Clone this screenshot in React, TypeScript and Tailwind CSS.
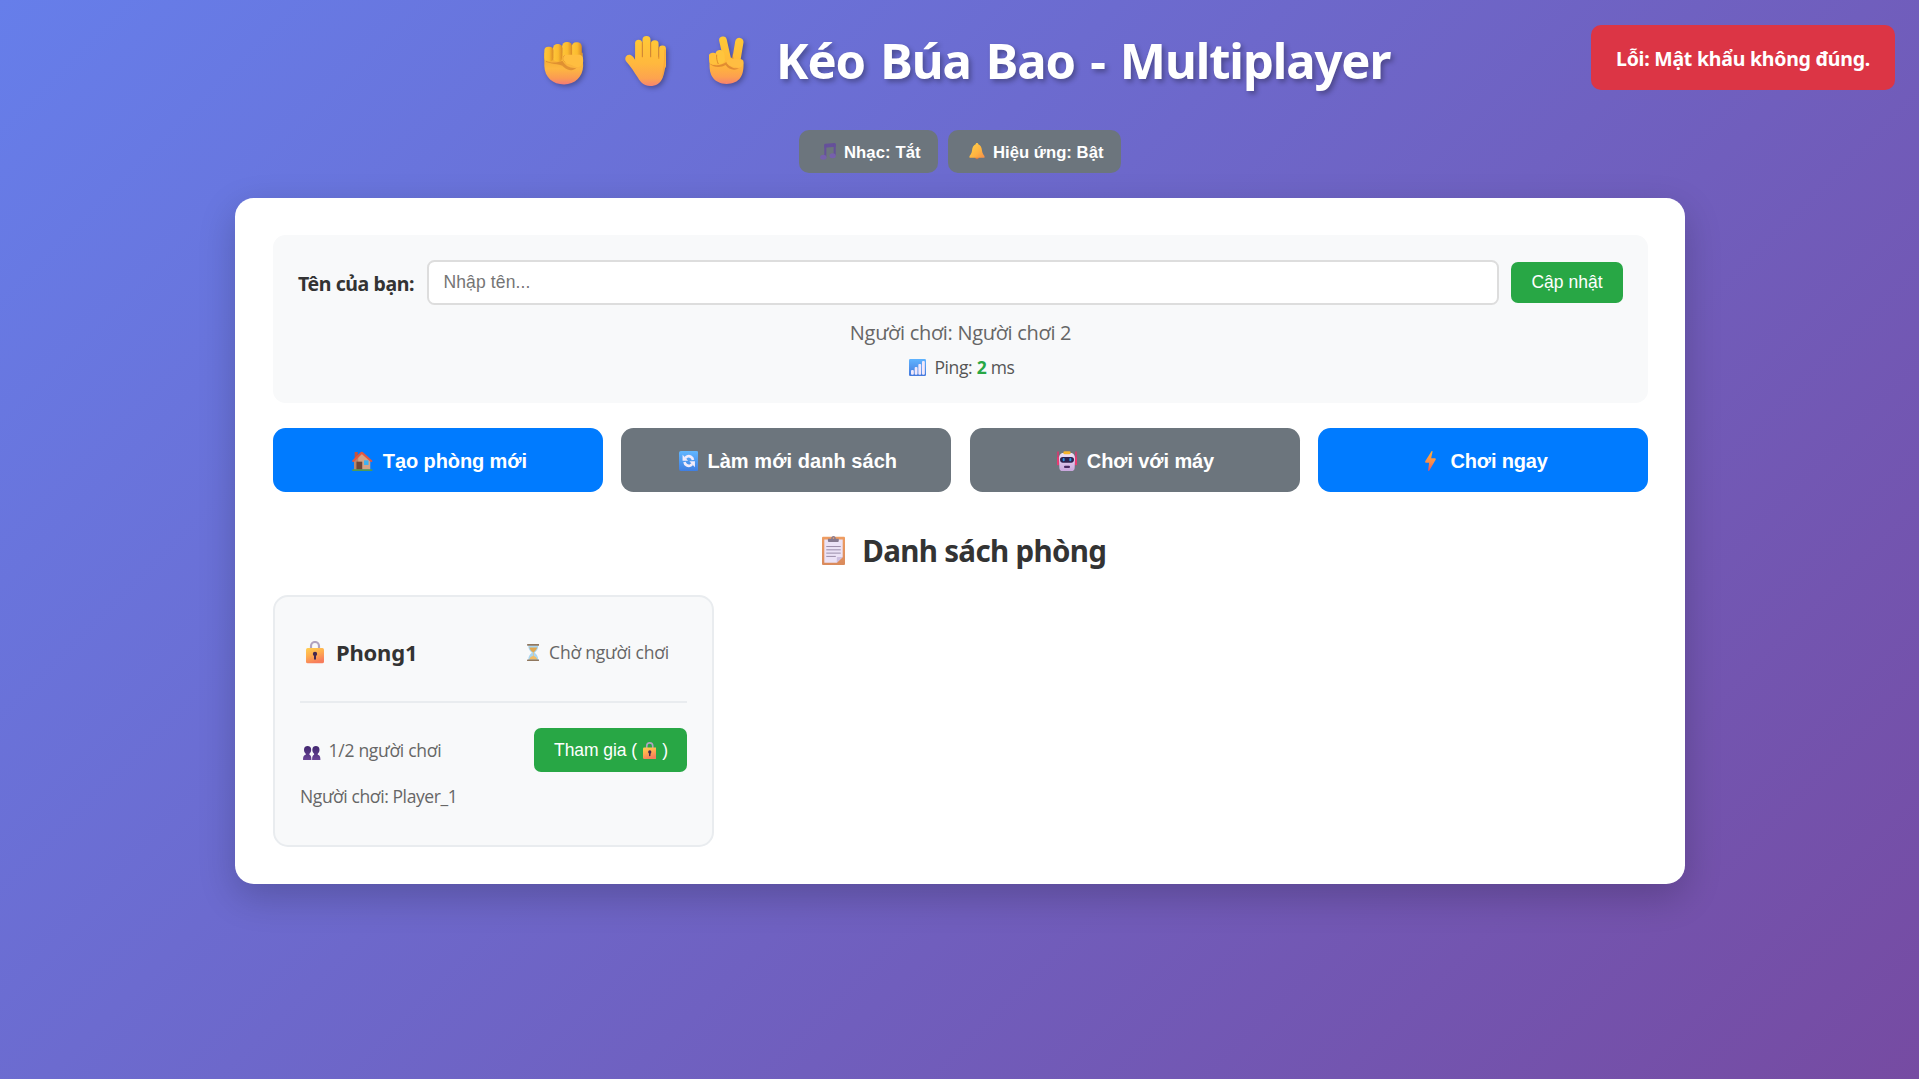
import type { ReactNode } from 'react';

function FistIcon() {
  return (
    <svg viewBox="0 0 118 127" className="ml-4 mt-[17px] h-[42.5px] w-[39.5px] shrink-0 drop-shadow-[2.5px_2.5px_2.5px_rgba(0,0,0,0.3)]">
      <defs>
        <linearGradient id="fistPalm" x1="0" y1="0" x2="0" y2="1">
          <stop offset="0" stopColor="#f0a92c" />
          <stop offset="0.5" stopColor="#fdb741" />
          <stop offset="0.8" stopColor="#fb9b52" />
          <stop offset="1" stopColor="#f47a78" />
        </linearGradient>
        <linearGradient id="fistFinger" x1="0" y1="0" x2="1" y2="0">
          <stop offset="0" stopColor="#ffc63a" />
          <stop offset="0.55" stopColor="#fbbb2e" />
          <stop offset="1" stopColor="#d98a27" />
        </linearGradient>
      </defs>
      <path d="M1 32H115L117 72C116 104 92 127 60 127C26 127 2 106 1 72Z" fill="url(#fistPalm)" />
      <rect x="83" y="1" width="30" height="56" rx="13" fill="url(#fistFinger)" />
      <rect x="54" y="0" width="30" height="56" rx="14" fill="url(#fistFinger)" />
      <rect x="27" y="6" width="28" height="52" rx="13" fill="url(#fistFinger)" />
      <rect x="1" y="14" width="27" height="44" rx="12" fill="url(#fistFinger)" />
      <path d="M6 56C20 64 40 62 56 56C60 70 80 80 97 77C88 88 70 86 58 74C52 66 30 68 6 60Z" fill="#cf7a2c" opacity="0.6" />
      <path d="M66 38H104C114 38 118 46 117 58C116 72 104 78 92 73C82 68 72 66 62 62C48 56 52 38 66 38Z" fill="#ffbe40" />
      <path d="M62 40C54 44 54 56 64 61" stroke="#d98a2a" strokeWidth="2.500" fill="none" opacity="0.7" />
    </svg>
  );
}

function HandIcon() {
  return (
    <svg viewBox="0 0 122 149" className="ml-[41.5px] mt-[11px] h-[50px] w-[41px] shrink-0 drop-shadow-[2.5px_2.5px_2.5px_rgba(0,0,0,0.3)]">
      <defs>
        <linearGradient id="handSkin" gradientUnits="userSpaceOnUse" x1="0" y1="0" x2="0" y2="149">
          <stop offset="0" stopColor="#ffca36" />
          <stop offset="0.55" stopColor="#ffb83e" />
          <stop offset="0.85" stopColor="#fda34f" />
          <stop offset="1" stopColor="#f68470" />
        </linearGradient>
      </defs>
      <g fill="url(#handSkin)">
        <rect x="30" y="11" width="21" height="80" rx="10.500" />
        <rect x="52" y="0" width="24" height="90" rx="12" />
        <rect x="77" y="13" width="23" height="80" rx="11" />
        <rect x="101" y="28" width="21" height="70" rx="10" />
        <path d="M30 62H122C122 84 119 104 113 122C106 142 92 149 75 149C56 149 46 138 38 124C28 108 18 92 3 75C-4 64 6 52 18 57C24 60 28 67 32 74Z" />
      </g>
      <g stroke="#df8620" strokeWidth="3.500" strokeLinecap="round" opacity="0.75">
        <path d="M51.500 20V62" />
        <path d="M76.500 20V62" />
        <path d="M100.500 34V66" />
      </g>
      <path d="M119 40C119 80 117 104 110 124" stroke="#f09a34" strokeWidth="4" fill="none" opacity="0.5" />
    </svg>
  );
}

function VictoryIcon() {
  return (
    <svg viewBox="0 0 105 144" className="ml-[43px] mt-[11px] h-[48px] w-[35px] shrink-0 drop-shadow-[2.5px_2.5px_2.5px_rgba(0,0,0,0.3)]">
      <defs>
        <linearGradient id="victorySkin" gradientUnits="userSpaceOnUse" x1="0" y1="0" x2="0" y2="144">
          <stop offset="0" stopColor="#ffca36" />
          <stop offset="0.6" stopColor="#ffb83a" />
          <stop offset="0.85" stopColor="#fda04f" />
          <stop offset="1" stopColor="#f6816f" />
        </linearGradient>
      </defs>
      <path d="M2 74C10 66 90 60 103 74C105 92 103 112 95 124C86 138 70 144 53 144C34 144 16 136 7 118C1 104 1 88 2 74Z" fill="url(#victorySkin)" />
      <path d="M42 13L58 84" stroke="url(#victorySkin)" strokeWidth="23" strokeLinecap="round" />
      <path d="M91 18L80 84" stroke="url(#victorySkin)" strokeWidth="25" strokeLinecap="round" />
      <path d="M68 72L70 50L75 72Z" fill="#dc8a27" opacity="0.5" />
      <path d="M4 80C12 92 40 88 52 78C58 92 76 100 90 96C78 106 58 100 50 87C36 96 12 94 4 85Z" fill="#cd6f2c" opacity="0.6" />
      <rect x="0" y="50" width="25" height="36" rx="12" fill="#ffc03c" transform="rotate(-6 12 69)" />
      <rect x="20" y="42" width="27" height="42" rx="13" fill="#ffc53d" transform="rotate(-6 33 63)" />
      <path d="M23 56C22 66 24 76 28 84" stroke="#df8b29" strokeWidth="3" fill="none" />
      <path d="M62 70C74 66 94 68 102 76C106 90 94 98 82 94C72 92 62 90 56 84C50 78 54 72 62 70Z" fill="#ffbd42" />
    </svg>
  );
}

function MusicIcon() {
  return (
    <svg viewBox="0 0 48 51" className="h-[17px] w-[16px]">
      <g fill="#65509a">
        <path d="M13 6C13 3 14 2 17 2L44 0C46 0 47 1 47 3V11L13 14Z" />
        <rect x="13" y="5" width="6" height="38" />
        <rect x="41" y="3" width="6" height="36" />
      </g>
      <ellipse cx="10" cy="43" rx="9.500" ry="7.500" fill="#7660ac" />
      <ellipse cx="38" cy="38" rx="9.500" ry="7.500" fill="#7660ac" />
    </svg>
  );
}

function BellIcon() {
  return (
    <svg viewBox="0 0 48 50" className="h-[16.5px] w-[16px]">
      <defs>
        <linearGradient id="bell" x1="0" y1="0" x2="1" y2="1">
          <stop offset="0" stopColor="#ffd24a" />
          <stop offset="0.6" stopColor="#ffb340" />
          <stop offset="1" stopColor="#f58d4b" />
        </linearGradient>
      </defs>
      <circle cx="24" cy="44" r="5.500" fill="#d97a3c" />
      <path d="M20 4C20 -1 28 -1 28 4C35 7 38 14 39 22C40 31 43 34 46 39C48 43 47 45 43 45H5C1 45 0 43 2 39C5 34 8 31 9 22C10 14 13 7 20 4Z" fill="url(#bell)" />
    </svg>
  );
}

function SignalIcon() {
  return (
    <svg viewBox="0 0 51 51" className="h-[17px] w-[17px]">
      <defs>
        <linearGradient id="signal" x1="0" y1="0" x2="0" y2="1">
          <stop offset="0" stopColor="#5fb4ff" />
          <stop offset="1" stopColor="#4478dc" />
        </linearGradient>
      </defs>
      <rect width="51" height="51" rx="4" fill="url(#signal)" />
      <g fill="#f0e8fb">
        <rect x="6" y="33" width="8.500" height="14" rx="3" />
        <rect x="17" y="24" width="8.500" height="23" rx="3" />
        <rect x="28" y="15" width="8.500" height="32" rx="3" />
        <rect x="39" y="6" width="8.500" height="41" rx="3" />
      </g>
    </svg>
  );
}

function HouseIcon() {
  return (
    <svg viewBox="0 0 46 60" preserveAspectRatio="none" className="h-[20px] w-[20.5px]">
      <rect x="6" y="3" width="7" height="22" fill="#c5543d" />
      <path d="M5 28L22 6L41 28V56H5Z" fill="#d3a386" />
      <path d="M5 28L14 16V56H5Z" fill="#b9866a" />
      <rect x="10" y="32" width="13" height="24" fill="#6f4638" />
      <rect x="27" y="28" width="10" height="14" fill="#3bb2f2" />
      <path d="M3 30L22 5L43 30" stroke="#e4573f" strokeWidth="5.500" fill="none" strokeLinejoin="round" strokeLinecap="round" />
      <rect x="0" y="55" width="46" height="5" rx="2" fill="#4f9b55" />
    </svg>
  );
}

function RefreshIcon() {
  return (
    <svg viewBox="0 0 60 60" className="h-[20px] w-[19.5px]" preserveAspectRatio="none">
      <defs>
        <linearGradient id="refresh" x1="0" y1="0" x2="0" y2="1">
          <stop offset="0" stopColor="#62b7ff" />
          <stop offset="1" stopColor="#3f7ee2" />
        </linearGradient>
      </defs>
      <rect width="60" height="60" rx="6" fill="url(#refresh)" />
      <g fill="none" stroke="#f2ecfb" strokeWidth="8">
        <path d="M17 33C18 42 28 47 36 43L41 39" />
        <path d="M43 27C42 18 32 13 24 17L19 21" />
      </g>
      <path d="M11 11L11 29L28 29Z" fill="#f2ecfb" />
      <path d="M49 49L49 31L32 31Z" fill="#f2ecfb" />
    </svg>
  );
}

function RobotIcon() {
  return (
    <svg viewBox="0 0 60 60" className="h-[20px] w-[20px]">
      <defs>
        <linearGradient id="robot" x1="0" y1="0" x2="0" y2="1">
          <stop offset="0" stopColor="#efe3f8" />
          <stop offset="1" stopColor="#c9a6dd" />
        </linearGradient>
      </defs>
      <path d="M3 3V24M57 3V24" stroke="#d43a70" strokeWidth="5" strokeLinecap="round" />
      <rect x="0" y="18" width="7" height="25" rx="3.500" fill="#e83b72" />
      <rect x="53" y="18" width="7" height="25" rx="3.500" fill="#e83b72" />
      <path d="M16 6H44C51 8 54 14 54 22L53 50C53 57 49 60 43 60H17C11 60 7 57 7 50L6 22C6 14 9 8 16 6Z" fill="url(#robot)" />
      <rect x="19" y="1" width="22" height="9" rx="4" fill="#f8b52c" />
      <rect x="9" y="18" width="42" height="17" rx="8.500" fill="#2e2350" />
      <rect x="17" y="21" width="6" height="10" rx="3" fill="#2b93dd" />
      <rect x="37" y="21" width="6" height="10" rx="3" fill="#2b93dd" />
      <rect x="21" y="44" width="18" height="7" rx="3" fill="#4a2c63" />
    </svg>
  );
}

function BoltIcon() {
  return (
    <svg viewBox="0 0 32 60" className="h-[20px] w-[11px]">
      <defs>
        <linearGradient id="bolt" x1="0" y1="0" x2="0" y2="1">
          <stop offset="0" stopColor="#ffad3a" />
          <stop offset="0.6" stopColor="#f98a4c" />
          <stop offset="1" stopColor="#ee4d60" />
        </linearGradient>
      </defs>
      <path d="M19 1C20 -1 23 0 22 3L18 22H29C32 22 33 24 31 27L13 58C11 61 8 60 9 56L12 35H3C0 35 -1 32 1 29Z" fill="url(#bolt)" />
    </svg>
  );
}

function ClipboardIcon() {
  return (
    <svg viewBox="0 0 70 88" className="h-[29.300px] w-[23px]">
      <defs>
        <linearGradient id="board" x1="0" y1="0" x2="0" y2="1">
          <stop offset="0" stopColor="#ef9d62" />
          <stop offset="1" stopColor="#d98a5c" />
        </linearGradient>
      </defs>
      <rect y="2" width="70" height="86" rx="3" fill="url(#board)" />
      <path d="M7 10H63V63L45 81H7Z" fill="#ebe2f6" />
      <path d="M63 63L45 81V66C45 64 46 63 48 63Z" fill="#cdbfe0" />
      <path d="M18 8H28C28 -3 42 -3 42 8H51V15C51 17 50 18 48 18H21C19 18 18 17 18 15Z" fill="#85798f" />
      <circle cx="35" cy="6" r="2.500" fill="#e9a071" />
      <g fill="#9a8ca8">
        <rect x="13" y="30" width="44" height="3" />
        <rect x="13" y="40" width="44" height="3" />
        <rect x="13" y="50" width="44" height="3" />
        <rect x="13" y="60" width="29" height="3" />
      </g>
    </svg>
  );
}

function LockIcon({ id, className }: { id: string; className: string }) {
  return (
    <svg viewBox="0 0 54 67" className={className}>
      <defs>
        <linearGradient id={id} x1="0" y1="0" x2="0.4" y2="1">
          <stop offset="0" stopColor="#ffcf52" />
          <stop offset="0.5" stopColor="#ffad4e" />
          <stop offset="1" stopColor="#f77d5c" />
        </linearGradient>
      </defs>
      <path d="M15 24V15C15 -1 39 -1 39 15V24" fill="none" stroke="#b1a3bf" strokeWidth="6.500" />
      <rect y="21" width="54" height="46" rx="5" fill={`url(#${id})`} />
      <circle cx="27" cy="39" r="6.500" fill="#45284f" />
      <rect x="24" y="41" width="6" height="15" rx="3" fill="#45284f" />
    </svg>
  );
}

function HourglassIcon() {
  return (
    <svg viewBox="0 0 38 52" className="h-[17.300px] w-[12.500px]">
      <path d="M4 4H34C34 15 30 20 23 26C30 31 34 37 34 48H4C4 37 8 31 15 26C8 20 4 15 4 4Z" fill="#a9d6f2" />
      <path d="M7 10H31C29 17 25 21 19 25C13 21 9 17 7 10Z" fill="#e2a850" />
      <path d="M18 24H20V36C26 37 30 41 31 47H7C8 41 12 37 18 36Z" fill="#f2bd66" />
      <rect width="38" height="5" rx="2" fill="#90785f" />
      <rect y="47" width="38" height="5" rx="2" fill="#90785f" />
    </svg>
  );
}

function PeopleIcon() {
  return (
    <svg viewBox="0 0 52 42" className="h-[14px] w-[17.500px]">
      <defs>
        <linearGradient id="people" x1="0" y1="0" x2="0" y2="1">
          <stop offset="0" stopColor="#41276f" />
          <stop offset="1" stopColor="#6a4496" />
        </linearGradient>
      </defs>
      <g fill="url(#people)">
        <path d="M3 9C3 -3 24 -3 24 9C25 17 22 20 19 23V26C23 28 25 31 25 42H0C0 31 2 28 8 26V23C5 20 2 17 3 9Z" />
        <path d="M28 9C28 -3 49 -3 49 9C50 17 47 20 44 23V26C50 28 52 31 52 42H27C27 31 29 28 33 26V23C30 20 27 17 28 9Z" />
      </g>
    </svg>
  );
}

const arial = "font-['Liberation_Sans',Arial,sans-serif]";

function ActionButton({ blue, icon, children }: { blue?: boolean; icon: ReactNode; children: ReactNode }) {
  return (
    <button
      className={`flex h-16 items-center justify-center rounded-[12.5px] pt-0.5 text-[20px] leading-[30px] font-bold text-white ${arial} ${blue ? 'bg-[#007bff]' : 'bg-[#6c757d]'}`}
    >
      {icon}
      {children}
    </button>
  );
}

export default function App() {
  return (
    <div className="relative min-h-[1079px] overflow-hidden whitespace-nowrap bg-[linear-gradient(135deg,#667eea_0%,#764ba2_100%)] pt-[25px] font-['Open_Sans','Noto_Sans',sans-serif] text-[#333]">
      <h1 className="mx-auto flex h-[70px] w-[863px] items-start">
        <FistIcon />
        <HandIcon />
        <VictoryIcon />
        <span className="ml-[32px] font-['Noto_Sans',sans-serif] text-[49px] leading-[70px] font-bold tracking-[-1.11px] text-white [word-spacing:3.5px] [text-shadow:2.5px_2.5px_5px_rgba(0,0,0,0.3)]">
          Kéo Búa Bao - Multiplayer
        </span>
      </h1>

      <div className={`mt-[35px] flex justify-center gap-2.5 pl-px text-[16.67px] font-bold text-white ${arial}`}>
        <button className="flex h-[43px] w-[139px] items-center rounded-[10px] bg-[#6c757d] pl-[21px]">
          <MusicIcon />
          <span className="ml-2 pt-px tracking-[0.08px]">Nhạc: Tắt</span>
        </button>
        <button className="flex h-[43px] w-[173px] items-center rounded-[10px] bg-[#6c757d] pl-[21px]">
          <BellIcon />
          <span className="ml-[8px] pt-px tracking-[0.03px]">Hiệu ứng: Bật</span>
        </button>
      </div>

      <main className="mx-auto mt-[25px] h-[686px] w-[1450px] rounded-[18.75px] bg-white pt-[37px] pr-[36.5px] pl-[38.5px] shadow-[0_12.5px_37.5px_rgba(0,0,0,0.2)]">
        <section className="h-[168px] rounded-[12.5px] bg-[#f8f9fa] px-[25px] pt-[25px]">
          <div className="flex items-center">
            <label className="w-[129px] pt-0.5 font-['Noto_Sans',sans-serif] text-[19.5px] leading-[30px] font-bold tracking-[-0.4px]">Tên của bạn:</label>
            <input
              className={`h-[45px] min-w-0 flex-1 rounded-[7.5px] border-2 border-[#ddd] bg-white pr-4 pl-[14.5px] text-[17.5px] tracking-[0.12px] placeholder:text-[#757575] ${arial}`}
              placeholder="Nhập tên..."
            />
            <button className={`ml-[12.5px] h-[41px] w-[112px] rounded-[7px] bg-[#28a745] text-[17.5px] text-white ${arial}`}>Cập nhật</button>
          </div>
          <p className="mt-[13px] text-center text-[20px] leading-[30px] tracking-[-0.3px] text-[#666]">Người chơi: Người chơi 2</p>
          <p className="mt-1.5 flex items-center justify-center pl-[3px] text-[17.5px] leading-[26px] tracking-[-0.4px] text-[#555]">
            <SignalIcon />
            <span className="ml-2">Ping:</span>
            <span className="ml-[4.5px] font-bold text-[#28a745]">2</span>
            <span className="ml-[4.5px]">ms</span>
          </p>
        </section>

        <section className="mt-[25px] grid grid-cols-4 gap-[18.75px]">
          <ActionButton blue icon={<span className="mr-[10px] ml-[3.5px]"><HouseIcon /></span>}>
            <span className="tracking-[-0.1px]">Tạo phòng mới</span>
          </ActionButton>
          <ActionButton icon={<span className="mr-[9px] ml-[3.5px]"><RefreshIcon /></span>}>
            <span className="tracking-[0.06px]">Làm mới danh sách</span>
          </ActionButton>
          <ActionButton icon={<span className="mr-[9.500px] ml-[2px]"><RobotIcon /></span>}>
            <span className="tracking-[-0.1px]">Chơi với máy</span>
          </ActionButton>
          <ActionButton blue icon={<span className="mr-[14.500px] ml-[6.5px]"><BoltIcon /></span>}>
            <span className="tracking-[-0.15px]">Chơi ngay</span>
          </ActionButton>
        </section>

        <h2 className="mt-[37px] flex h-11 items-center justify-center pl-[7px] font-['Noto_Sans',sans-serif] text-[29.5px] leading-[44px] font-bold tracking-[-0.66px]">
          <ClipboardIcon />
          <span className="ml-[17.5px]">Danh sách phòng</span>
        </h2>

        <article className="mt-[22px] h-[252px] w-[441px] rounded-[15px] border-2 border-[#e9ecef] bg-[#f8f9fa] px-[25px] pt-[25px]">
          <header className="flex items-center justify-between border-b-2 border-[#e9ecef] pr-[18px] pb-[18px] pl-1.5">
            <h3 className="flex h-[61px] items-center font-['Noto_Sans',sans-serif] text-[22px] font-bold tracking-[-0.2px]">
              <LockIcon id="roomLock" className="h-[22.300px] w-[18px]" />
              <span className="ml-3">Phong1</span>
            </h3>
            <span className="flex items-center text-[17.5px] tracking-[-0.2px] text-[#666]">
              <HourglassIcon />
              <span className="ml-2.5">Chờ người chơi</span>
            </span>
          </header>
          <div className="mt-[25px] flex h-11 items-center justify-between text-[17.5px]">
            <span className="flex items-center pl-[3px] tracking-[-0.27px] text-[#666]">
              <span className="pt-[5px]"><PeopleIcon /></span>
              <span className="ml-2">1/2 người chơi</span>
            </span>
            <button className={`flex h-11 w-[153px] items-center rounded-[7px] bg-[#28a745] pt-px pl-5 text-white ${arial}`}>
              <span className="tracking-[-0.05px]">Tham gia (</span>
              <LockIcon id="joinLock" className="mr-[6px] ml-[5.500px] h-[17px] w-[13.500px]" />
              <span>)</span>
            </button>
          </div>
          <p className="mt-[11px] text-[17.5px] leading-[26px] tracking-[-0.4px] text-[#666]">Người chơi: Player_1</p>
        </article>
      </main>

      <div className="absolute top-[25px] right-6 h-[65px] w-[304px] rounded-[10px] bg-[#dc3545] pt-px pl-[25px] font-['Noto_Sans',sans-serif] text-[19.5px] leading-[65px] font-bold tracking-[-0.24px] text-white">
        Lỗi: Mật khẩu không đúng.
      </div>
    </div>
  );
}
